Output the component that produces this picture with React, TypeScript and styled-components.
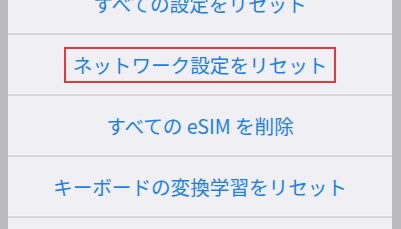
import styled, { createGlobalStyle } from "styled-components";

const GlobalStyle = createGlobalStyle`
  html, body {
    margin: 0;
    padding: 0;
    background: #b9b9be;
    overflow: hidden;
  }
`;

const Screen = styled.div`
  width: 401px;
  height: 229px;
  box-sizing: border-box;
  padding: 0 9px 0 8px;
  background: #b9b9be;
  overflow: hidden;
`;

const List = styled.div`
  display: flex;
  flex-direction: column;
  margin-top: -26px;
  background: #efeff4;
  height: 300px;
`;

const Row = styled.div`
  height: 59px;
  display: flex;
  align-items: center;
  justify-content: center;
  border-bottom: 2px solid #d7d7db;
  box-shadow: inset 0 -1px 0 #f7f7fa;
  padding-top: ${(p: { $shift?: number }) => p.$shift ?? 0}px;
  box-sizing: content-box;
`;

const Label = styled.span<{ $highlight?: boolean }>`
  font-family: "Noto Sans CJK JP", "Noto Sans", sans-serif;
  font-size: 19.6px;
  line-height: 26px;
  color: #1f80e4;
  white-space: nowrap;
  display: inline-block;
  padding: 3px 7px;
  border: 2px solid ${(p) => (p.$highlight ? "#e3383d" : "transparent")};
`;

const items = [
  { text: "すべての設定をリセット" },
  { text: "ネットワーク設定をリセット", highlight: true },
  { text: "すべての eSIM を削除" },
  { text: "キーボードの変換学習をリセット" },
];

export default function App() {
  return (
    <>
      <GlobalStyle />
      <Screen>
        <List>
          {items.map((it) => (
            <Row key={it.text}>
              <Label $highlight={it.highlight}>{it.text}</Label>
            </Row>
          ))}
        </List>
      </Screen>
    </>
  );
}
